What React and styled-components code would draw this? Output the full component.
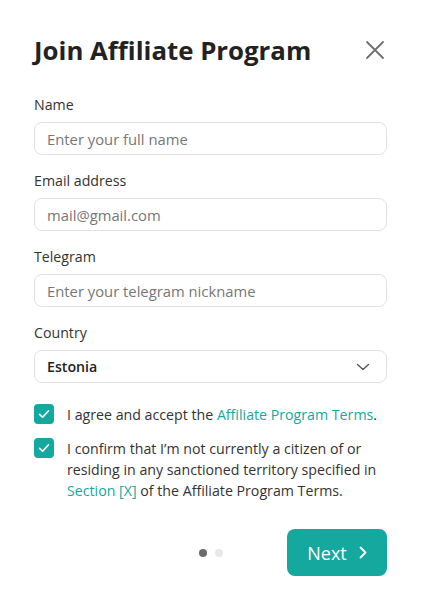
import React, { useState } from "react";
import styled, { createGlobalStyle } from "styled-components";

const Global = createGlobalStyle`
  html, body { margin: 0; padding: 0; background: #ffffff; }
  body { font-family: 'Open Sans', 'Noto Sans', sans-serif; color: #222; }
  * { box-sizing: border-box; }
`;

const Modal = styled.div`
  width: 421px;
  height: 602px;
  padding: 32px 34px 0 34px;
  display: flex;
  flex-direction: column;
`;

const Header = styled.div`
  display: flex;
  align-items: center;
  justify-content: space-between;
  height: 36px;
  margin-bottom: 27px;
`;

const Title = styled.h1`
  margin: 0;
  font-size: 25.8px;
  font-weight: 700;
  color: #222;
`;

const CloseButton = styled.button`
  border: none;
  background: none;
  padding: 0;
  width: 22px;
  height: 22px;
  margin-right: 1px;
  cursor: pointer;
  display: flex;
  align-items: center;
  justify-content: center;
`;

const Field = styled.div`
  display: flex;
  flex-direction: column;
  margin-bottom: 16px;
`;

const Label = styled.label`
  font-size: 14.2px;
  color: #333;
  line-height: 20px;
  margin-bottom: 7px;
`;

const Input = styled.input`
  height: 33px;
  border: 1px solid #e2e2e2;
  border-radius: 8px;
  padding: 0 12px;
  font-family: inherit;
  font-size: 14.8px;
  color: #222;
  outline: none;
  &::placeholder { color: #777; }
`;

const Select = styled.div`
  height: 33px;
  border: 1px solid #e2e2e2;
  border-radius: 8px;
  padding: 0 16px 0 12px;
  display: flex;
  align-items: center;
  justify-content: space-between;
  font-size: 14.2px;
  font-weight: 600;
  color: #222;
`;

const Checks = styled.div`
  display: flex;
  flex-direction: column;
  gap: 13px;
  margin-top: 5px;
`;

const CheckRow = styled.label`
  display: flex;
  align-items: flex-start;
  gap: 13px;
  font-size: 14.2px;
  line-height: 21px;
  color: #333;
  cursor: pointer;
`;

const Box = styled.span`
  flex: 0 0 20px;
  width: 20px;
  height: 20px;
  border-radius: 4px;
  background: ${(p) => (p.checked ? "#14a89f" : "#fff")};
  border: ${(p) => (p.checked ? "none" : "1px solid #ccc")};
  display: flex;
  align-items: center;
  justify-content: center;
`;

const Link = styled.a`
  color: #14a89f;
  text-decoration: none;
`;

const Footer = styled.div`
  display: flex;
  align-items: center;
  justify-content: flex-end;
  margin-top: 28px;
`;

const Dots = styled.div`
  display: flex;
  gap: 8px;
  margin-right: 64px;
`;

const Dot = styled.span`
  width: 8px;
  height: 8px;
  border-radius: 50%;
  background: ${(p) => (p.active ? "#6b6b6b" : "#e8e8e8")};
`;

const NextButton = styled.button`
  width: 100px;
  height: 47px;
  border: none;
  border-radius: 8px;
  background: #14a89f;
  color: #fff;
  font-family: inherit;
  font-size: 18px;
  font-weight: 500;
  display: flex;
  align-items: center;
  justify-content: center;
  gap: 12px;
  padding-left: 6px;
  cursor: pointer;
`;

const Check = () => (
  <svg width="14" height="14" viewBox="0 0 14 14" fill="none">
    <path d="M2.5 7.3 L5.6 10.2 L11.5 3.8" stroke="#fff" strokeWidth="1.6" strokeLinecap="round" strokeLinejoin="round" />
  </svg>
);

export default function App() {
  const [agree, setAgree] = useState(true);
  const [confirm, setConfirm] = useState(true);

  return (
    <>
      <Global />
      <Modal>
        <Header>
          <Title>Join Affiliate Program</Title>
          <CloseButton aria-label="close">
            <svg width="20" height="20" viewBox="0 0 20 20">
              <path d="M2 2 L18 18 M18 2 L2 18" stroke="#6f6f6f" strokeWidth="1.8" strokeLinecap="round" />
            </svg>
          </CloseButton>
        </Header>

        <Field>
          <Label>Name</Label>
          <Input placeholder="Enter your full name" />
        </Field>
        <Field>
          <Label>Email address</Label>
          <Input placeholder="mail@gmail.com" />
        </Field>
        <Field>
          <Label>Telegram</Label>
          <Input placeholder="Enter your telegram nickname" />
        </Field>
        <Field>
          <Label>Country</Label>
          <Select>
            Estonia
            <svg width="14" height="8" viewBox="0 0 14 8">
              <path d="M1.5 1.5 L7 6.5 L12.5 1.5" stroke="#555" strokeWidth="1.4" fill="none" strokeLinecap="round" strokeLinejoin="round" />
            </svg>
          </Select>
        </Field>

        <Checks>
          <CheckRow onClick={() => setAgree(!agree)}>
            <Box checked={agree}>{agree && <Check />}</Box>
            <span>
              I agree and accept the <Link href="#">Affiliate Program Terms</Link>.
            </span>
          </CheckRow>
          <CheckRow onClick={() => setConfirm(!confirm)}>
            <Box checked={confirm}>{confirm && <Check />}</Box>
            <span>
              I confirm that I’m not currently a citizen of or residing in any sanctioned territory specified in{" "}
              <Link href="#">Section [X]</Link> of the Affiliate Program Terms.
            </span>
          </CheckRow>
        </Checks>

        <Footer>
          <Dots>
            <Dot active />
            <Dot />
          </Dots>
          <NextButton>
            Next
            <svg width="8" height="13" viewBox="0 0 8 13">
              <path d="M1.5 1.5 L6.5 6.5 L1.5 11.5" stroke="#fff" strokeWidth="1.8" fill="none" strokeLinecap="round" strokeLinejoin="round" />
            </svg>
          </NextButton>
        </Footer>
      </Modal>
    </>
  );
}
